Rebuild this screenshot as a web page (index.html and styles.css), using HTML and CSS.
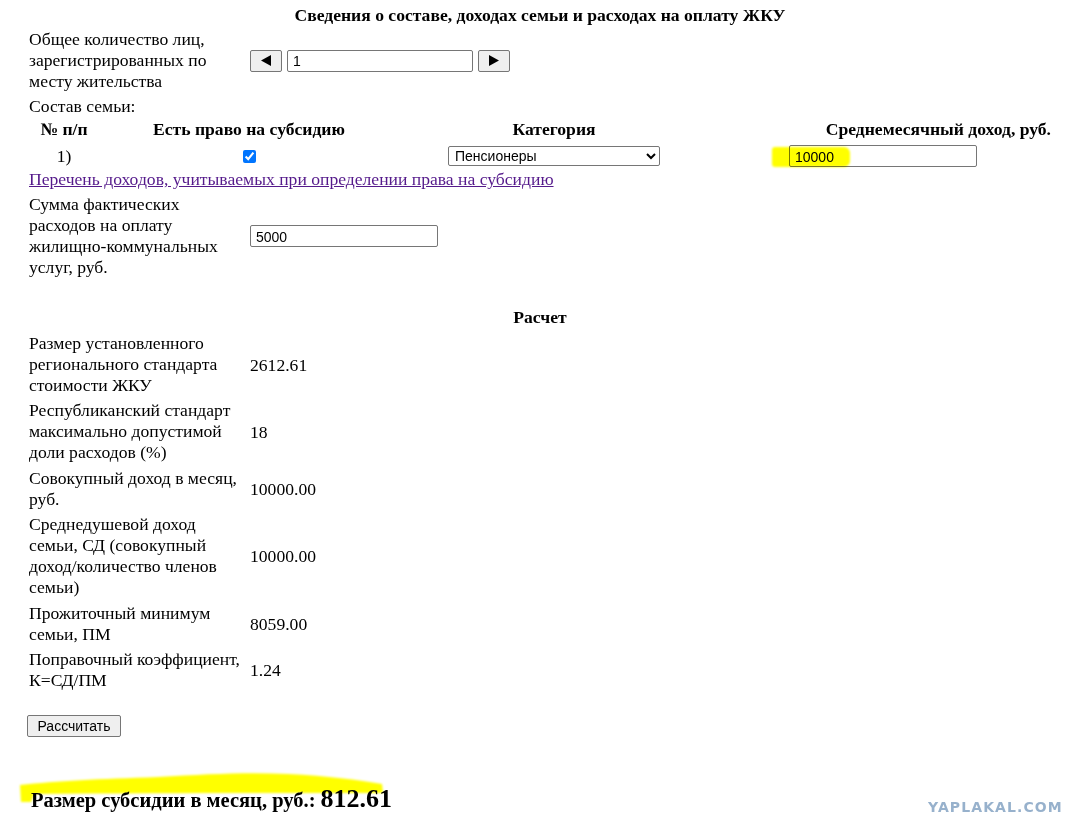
FILE: index.html
```html
<!DOCTYPE html>
<html lang="ru">
<head>
    <meta charset="UTF-8">
    <title>Расчет субсидии на оплату ЖКУ</title>
    <link rel="stylesheet" href="styles.css">
</head>
<body>
    <div class="page">
        <h1 class="title">Сведения о составе, доходах семьи и расходах на оплату ЖКУ</h1>

        <div class="field">
            <div class="field-label">Общее количество лиц, зарегистрированных по месту жительства</div>
            <div class="stepper">
                <button class="btn btn-arrow" type="button">
                    <svg width="10" height="11" viewBox="0 0 10 11"><polygon points="0,5.5 10,0 10,11" fill="#000"/></svg>
                </button>
                <input class="text-input stepper-input" type="text" value="1">
                <button class="btn btn-arrow" type="button">
                    <svg width="10" height="11" viewBox="0 0 10 11"><polygon points="10,5.5 0,0 0,11" fill="#000"/></svg>
                </button>
            </div>
        </div>

        <div class="caption">Состав семьи:</div>
        <div class="family">
            <div class="family-head">№ п/п</div>
            <div class="family-head">Есть право на субсидию</div>
            <div class="family-head">Категория</div>
            <div class="family-head head-income">Среднемесячный доход, руб.</div>

            <div class="family-cell">1)</div>
            <div class="family-cell"><input class="check" type="checkbox" checked></div>
            <div class="family-cell">
                <select class="select">
                    <option>Пенсионеры</option>
                    <option>Работающие</option>
                    <option>Дети</option>
                </select>
            </div>
            <div class="family-cell cell-income">
                <span class="marker-wrap">
                    <input class="text-input" type="text" value="10000">
                    <span class="marker"></span>
                </span>
            </div>
        </div>
        <a class="income-link" href="#">Перечень доходов, учитываемых при определении права на субсидию</a>

        <div class="field field-costs">
            <div class="field-label">Сумма фактических расходов на оплату жилищно-коммунальных услуг, руб.</div>
            <div><input class="text-input" type="text" value="5000"></div>
        </div>

        <h2 class="section-title">Расчет</h2>
        <div class="calc">
            <div class="field">
                <div class="field-label">Размер установленного регионального стандарта стоимости ЖКУ</div>
                <div class="field-value">2612.61</div>
            </div>
            <div class="field">
                <div class="field-label">Республиканский стандарт максимально допустимой доли расходов (%)</div>
                <div class="field-value">18</div>
            </div>
            <div class="field">
                <div class="field-label">Совокупный доход в месяц, руб.</div>
                <div class="field-value">10000.00</div>
            </div>
            <div class="field">
                <div class="field-label">Среднедушевой доход семьи, СД (совокупный доход/количество членов семьи)</div>
                <div class="field-value">10000.00</div>
            </div>
            <div class="field">
                <div class="field-label">Прожиточный минимум семьи, ПМ</div>
                <div class="field-value">8059.00</div>
            </div>
            <div class="field">
                <div class="field-label">Поправочный коэффициент, К=СД/ПМ</div>
                <div class="field-value">1.24</div>
            </div>
        </div>

        <button class="btn btn-calc" type="button">Рассчитать</button>

        <div class="result">
            <svg class="result-marker" width="370" height="36" viewBox="0 0 370 36">
                <path d="M2,15 C40,11 80,9 140,7 C190,4 230,2 270,4 C310,6 340,10 364,14 L365,23 C300,23 150,23 16,24 L13,32 L3,32 Z" fill="#ffff00"/>
            </svg>
            <span class="result-text">Размер субсидии в месяц, руб.: <span class="result-sum">812.61</span></span>
        </div>
    </div>
    <div class="watermark">YAPLAKAL.COM</div>
</body>
</html>
```

FILE: styles.css
```css
body {
    margin: 0;
    font-family: "Liberation Serif", "Times New Roman", serif;
    font-size: 17.6px;
    line-height: 21px;
    color: #000;
    background: #fff;
}
.page {
    position: relative;
    width: 1022px;
    padding: 5px 0 30px 29px;
}
.title {
    margin: 0 0 3px;
    font-size: 17.6px;
    line-height: 21px;
    text-align: center;
}
.field {
    display: grid;
    grid-template-columns: 213px auto;
    column-gap: 8px;
    align-items: center;
    justify-content: start;
}
.field-value {
    padding-top: 1px;
}
.stepper {
    display: flex;
    gap: 5px;
    align-items: center;
}
.btn {
    font-family: "Liberation Sans", Arial, sans-serif;
    font-size: 14px;
    height: 22px;
    padding: 0 6px;
    background: #efefef;
    color: #000;
    border: 1px solid #767676;
    border-radius: 2px;
    box-sizing: border-box;
}
.btn-arrow {
    display: flex;
    align-items: center;
    justify-content: center;
    width: 32px;
    padding: 0;
}
.text-input {
    width: 188px;
    height: 22px;
    box-sizing: border-box;
    margin: 0;
    padding: 1px 5px 0;
    font-family: "Liberation Sans", Arial, sans-serif;
    font-size: 14px;
    color: #000;
    border: 1px solid #767676;
    border-radius: 2px;
    background: #fff;
}
.stepper-input {
    width: 186px;
}
.caption {
    margin-top: 4px;
}
.family {
    display: grid;
    grid-template-columns: 70px 300px 310px 342px;
    row-gap: 5px;
    margin-top: 2px;
    align-items: center;
}
.family-head {
    font-weight: bold;
    text-align: center;
}
.head-income {
    text-align: right;
}
.family-cell {
    display: flex;
    justify-content: center;
    align-items: center;
    height: 22px;
}
.cell-income {
    justify-content: flex-start;
    padding-left: 80px;
}
.check {
    width: 13px;
    height: 13px;
    margin: 0;
    accent-color: #0075ff;
}
.select {
    width: 212px;
    height: 20px;
    box-sizing: border-box;
    padding: 0 2px;
    font-family: "Liberation Sans", Arial, sans-serif;
    font-size: 14px;
    color: #000;
    background: #fff;
    border: 1px solid #767676;
    border-radius: 2px;
}
.marker-wrap {
    position: relative;
    display: inline-block;
    height: 22px;
}
.marker-wrap .text-input {
    display: block;
}
/* маркер поверх поля дохода */
.marker {
    position: absolute;
    left: -17px;
    top: 2px;
    width: 78px;
    height: 20px;
    background: #ffff00;
    border-radius: 3px 6px 6px 3px;
    mix-blend-mode: multiply;
    filter: blur(1px);
}
.income-link {
    display: block;
    width: max-content;
    margin-top: 2px;
    color: #551a8b;
}
.field-costs {
    margin-top: 4px;
}
.section-title {
    margin: 29px 0 5px;
    font-size: 17.6px;
    line-height: 21px;
    text-align: center;
}
.calc {
    display: flex;
    flex-direction: column;
    gap: 4.4px;
}
.btn-calc {
    display: block;
    margin: 24px 0 0 -2px;
    width: 94px;
}
.result {
    position: relative;
    margin-top: 47px;
    line-height: 30px;
    padding-left: 2px;
}
.result-marker {
    position: absolute;
    left: -11px;
    top: -14px;
    mix-blend-mode: multiply;
    filter: blur(0.8px);
}
.result-text {
    position: relative;
    font-size: 20.5px;
    font-weight: bold;
}
.result-sum {
    font-size: 26px;
}
.watermark {
    position: absolute;
    left: 928px;
    top: 797px;
    font-family: "DejaVu Sans", sans-serif;
    font-weight: bold;
    font-size: 14px;
    letter-spacing: 1.1px;
    color: #97b1cc;
}
```
